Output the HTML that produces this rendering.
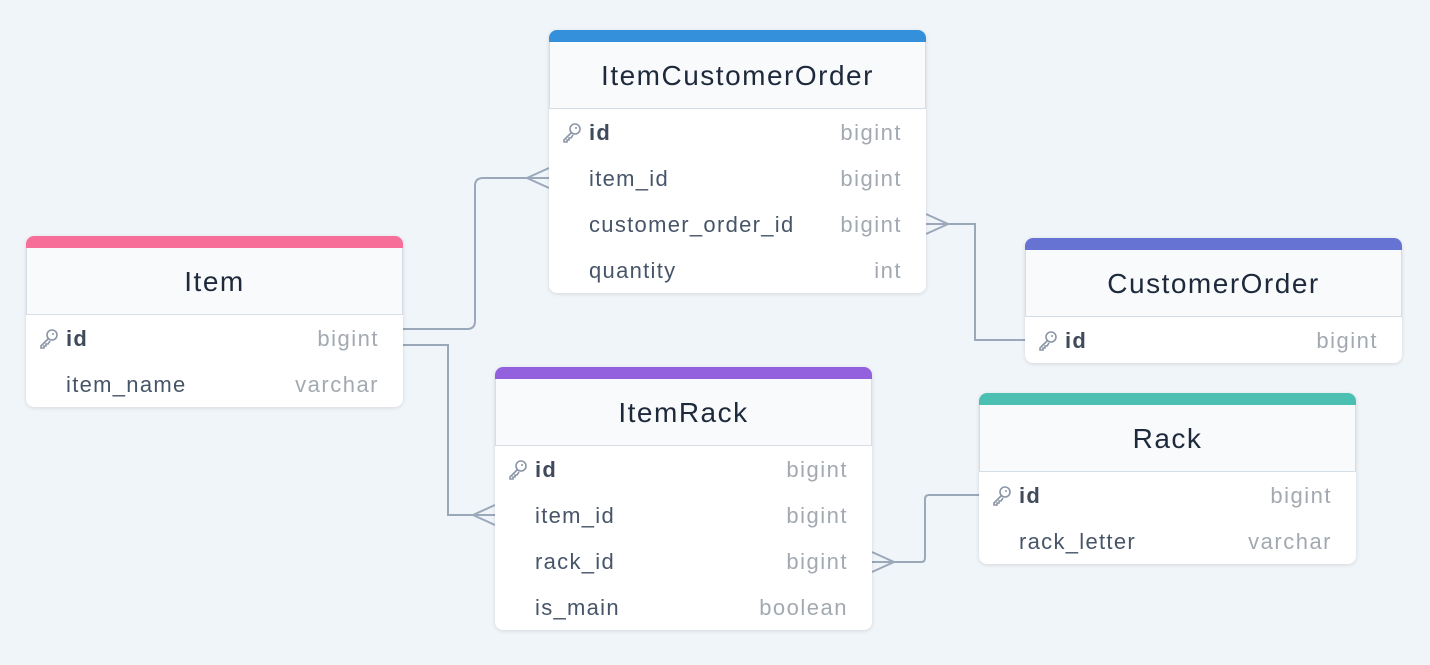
<!DOCTYPE html>
<html><head><meta charset="utf-8"><style>
*{margin:0;padding:0;box-sizing:border-box}
body{width:1430px;height:665px;background:#f0f5f9;font-family:"Liberation Sans",sans-serif;position:relative;overflow:hidden}
.t{position:absolute;width:377px;background:#fff;border-radius:8px;box-shadow:0 1px 4px rgba(0,0,0,.12);overflow:hidden}
.bar{height:12px}
.h{height:67px;background:#f8fafc;border:1px solid #d5dde6;border-top:none;display:flex;align-items:center;justify-content:center;font-size:28px;letter-spacing:1.5px;color:#1e293b;padding-top:2px}
.r{height:46px;position:relative;font-size:22px;letter-spacing:1.3px;color:#475569}
.r .n{position:absolute;left:40px;top:11px}
.r .ty{position:absolute;right:24px;top:11px;color:#a3a9b1;letter-spacing:1.5px}
.r b{color:#3f4b5b}
.r svg{position:absolute;left:13px;top:13px}
svg.l{position:absolute;left:0;top:0}
</style></head><body>
<svg class="l" width="1430" height="665" fill="none" stroke="#9aa8ba" stroke-width="2">
<path d="M403 329 H467 Q475 329 475 321 V186 Q475 178 483 178 H549"/>
<path d="M549 168 L527 178 L549 188"/>
<path d="M403 345 H448 V515 H495"/>
<path d="M495 505 L473 515 L495 525"/>
<path d="M926 224 H975 V340 H1025"/>
<path d="M926 214 L948 224 L926 234"/>
<path d="M872 562 H921 Q925 562 925 558 V499 Q925 495 929 495 H979"/>
<path d="M872 552 L894 562 L872 572"/>
</svg>
<svg width="0" height="0" style="position:absolute"><defs><g id="k" fill="none" stroke="#8a95a5" stroke-width="1.6"><circle cx="13" cy="7" r="5"/><path d="M9.5 10.5 L2 18 L2 20 L5 20 L5 18 L7 18 L7 16 L9 16 L11 13"/><circle cx="14" cy="6" r="1" fill="#8a95a5" stroke="none"/></g></defs></svg>

<div class="t" style="left:26px;top:236px"><div class="bar" style="background:#f76e99"></div><div class="h">Item</div>
<div class="r"><svg width="22" height="22"><use href="#k"/></svg><span class="n"><b>id</b></span><span class="ty">bigint</span></div>
<div class="r"><span class="n">item_name</span><span class="ty">varchar</span></div></div>

<div class="t" style="left:549px;top:30px"><div class="bar" style="background:#3590dc"></div><div class="h">ItemCustomerOrder</div>
<div class="r"><svg width="22" height="22"><use href="#k"/></svg><span class="n"><b>id</b></span><span class="ty">bigint</span></div>
<div class="r"><span class="n">item_id</span><span class="ty">bigint</span></div>
<div class="r"><span class="n">customer_order_id</span><span class="ty">bigint</span></div>
<div class="r"><span class="n">quantity</span><span class="ty">int</span></div></div>

<div class="t" style="left:1025px;top:238px"><div class="bar" style="background:#6673d2"></div><div class="h">CustomerOrder</div>
<div class="r"><svg width="22" height="22"><use href="#k"/></svg><span class="n"><b>id</b></span><span class="ty">bigint</span></div></div>

<div class="t" style="left:495px;top:367px"><div class="bar" style="background:#9360de"></div><div class="h">ItemRack</div>
<div class="r"><svg width="22" height="22"><use href="#k"/></svg><span class="n"><b>id</b></span><span class="ty">bigint</span></div>
<div class="r"><span class="n">item_id</span><span class="ty">bigint</span></div>
<div class="r"><span class="n">rack_id</span><span class="ty">bigint</span></div>
<div class="r"><span class="n">is_main</span><span class="ty">boolean</span></div></div>

<div class="t" style="left:979px;top:393px"><div class="bar" style="background:#4bc0b2"></div><div class="h">Rack</div>
<div class="r"><svg width="22" height="22"><use href="#k"/></svg><span class="n"><b>id</b></span><span class="ty">bigint</span></div>
<div class="r"><span class="n">rack_letter</span><span class="ty">varchar</span></div></div>
</body></html>
